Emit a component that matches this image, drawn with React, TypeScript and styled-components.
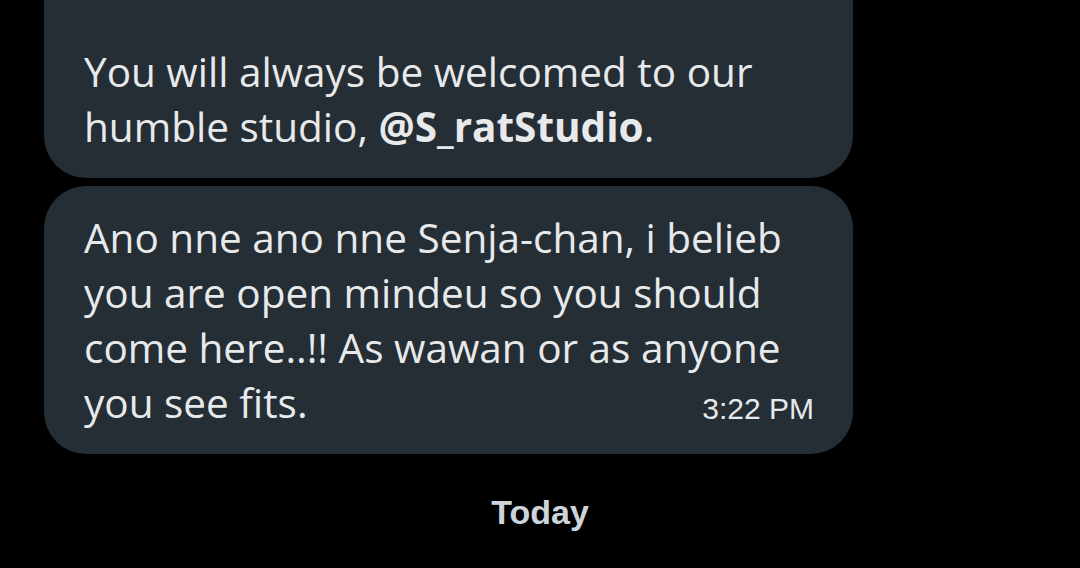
import styled, { createGlobalStyle } from "styled-components";

const Global = createGlobalStyle`
  html, body {
    margin: 0;
    padding: 0;
    background: #000000;
    overflow: hidden;
  }
`;

const Page = styled.div`
  width: 1080px;
  height: 568px;
  overflow: hidden;
  background: #000000;
  display: flex;
  flex-direction: column;
  padding-left: 44px;
  box-sizing: border-box;
`;

const Thread = styled.div`
  display: flex;
  flex-direction: column;
  gap: 8px;
  margin-top: -60px;
`;

const Bubble = styled.div<{ $top: number }>`
  width: 809px;
  box-sizing: border-box;
  background: #252d35;
  border-radius: 42px;
  padding: ${(p) => p.$top}px 39px 24px 40px;
  display: flex;
  flex-direction: column;
`;

const Text = styled.p`
  margin: 0;
  font-family: "Open Sans", "Noto Sans", sans-serif;
  font-size: 40.5px;
  line-height: 55px;
  color: #e7e9ea;
  white-space: nowrap;

  b {
    font-weight: 700;
  }
`;

const Footer = styled.div`
  display: flex;
  align-items: flex-end;
  justify-content: space-between;
`;

const Time = styled.span`
  font-family: "Liberation Sans", Arial, sans-serif;
  font-size: 30px;
  line-height: 34px;
  color: #e7e9ea;
  margin-bottom: 4px;
`;

const DateLabel = styled.div`
  margin-top: 38px;
  margin-left: -44px;
  text-align: center;
  font-family: "Liberation Sans", Arial, sans-serif;
  font-weight: 700;
  font-size: 34px;
  line-height: 40px;
  color: #cdd5db;
`;

export default function App() {
  return (
    <>
      <Global />
      <Page>
        <Thread>
          <Bubble $top={104}>
            <Text>
              You will always be welcomed to our
              <br />
              humble studio, <b>@S_ratStudio</b>.
            </Text>
          </Bubble>
          <Bubble $top={24}>
            <Text>
              Ano nne ano nne Senja-chan, i belieb
              <br />
              you are open mindeu so you should
              <br />
              come here..!! As wawan or as anyone
            </Text>
            <Footer>
              <Text>you see fits.</Text>
              <Time>3:22 PM</Time>
            </Footer>
          </Bubble>
        </Thread>
        <DateLabel>Today</DateLabel>
      </Page>
    </>
  );
}
